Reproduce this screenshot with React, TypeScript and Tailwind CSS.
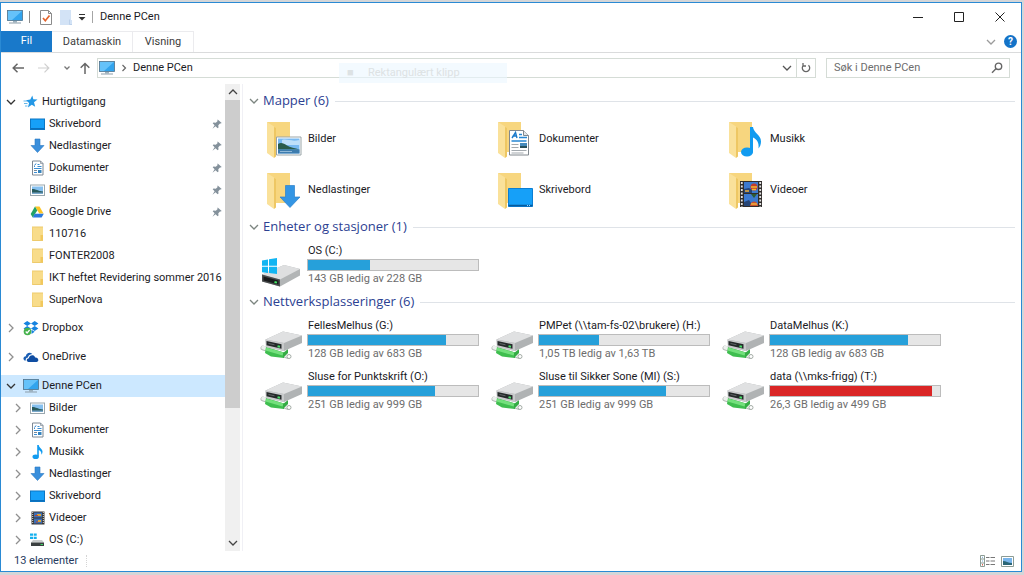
import React, { useState } from 'react';

type IconName =
  | 'desktop'
  | 'download'
  | 'document'
  | 'picture'
  | 'drive'
  | 'folder'
  | 'music'
  | 'video'
  | 'osdrive'
  | 'star'
  | 'dropbox'
  | 'onedrive'
  | 'pc';

interface TreeItem {
  label: string;
  icon: IconName;
  pinned?: boolean;
}

interface Drive {
  name: string;
  info: string;
  used: number;
  full?: boolean;
  system?: boolean;
}

const quickAccess: TreeItem[] = [
  { label: 'Skrivebord', icon: 'desktop', pinned: true },
  { label: 'Nedlastinger', icon: 'download', pinned: true },
  { label: 'Dokumenter', icon: 'document', pinned: true },
  { label: 'Bilder', icon: 'picture', pinned: true },
  { label: 'Google Drive', icon: 'drive', pinned: true },
  { label: '110716', icon: 'folder' },
  { label: 'FONTER2008', icon: 'folder' },
  { label: 'IKT heftet Revidering sommer 2016', icon: 'folder' },
  { label: 'SuperNova', icon: 'folder' },
];

const pcItems: TreeItem[] = [
  { label: 'Bilder', icon: 'picture' },
  { label: 'Dokumenter', icon: 'document' },
  { label: 'Musikk', icon: 'music' },
  { label: 'Nedlastinger', icon: 'download' },
  { label: 'Skrivebord', icon: 'desktop' },
  { label: 'Videoer', icon: 'video' },
  { label: 'OS (C:)', icon: 'osdrive' },
];

const folders: TreeItem[] = [
  { label: 'Bilder', icon: 'picture' },
  { label: 'Dokumenter', icon: 'document' },
  { label: 'Musikk', icon: 'music' },
  { label: 'Nedlastinger', icon: 'download' },
  { label: 'Skrivebord', icon: 'desktop' },
  { label: 'Videoer', icon: 'video' },
];

const localDrives: Drive[] = [
  { name: 'OS (C:)', info: '143 GB ledig av 228 GB', used: 36.5, system: true },
];

const networkDrives: Drive[] = [
  { name: 'FellesMelhus (G:)', info: '128 GB ledig av 683 GB', used: 81 },
  { name: 'PMPet (\\\\tam-fs-02\\brukere) (H:)', info: '1,05 TB ledig av 1,63 TB', used: 35.5 },
  { name: 'DataMelhus (K:)', info: '128 GB ledig av 683 GB', used: 81 },
  { name: 'Sluse for Punktskrift (O:)', info: '251 GB ledig av 999 GB', used: 74.5 },
  { name: 'Sluse til Sikker Sone (MI) (S:)', info: '251 GB ledig av 999 GB', used: 74.5 },
  { name: 'data (\\\\mks-frigg) (T:)', info: '26,3 GB ledig av 499 GB', used: 95, full: true },
];

const SmallIcon = ({ name }: { name: IconName }) => {
  return (
    <svg viewBox="0 0 16 16" className="h-4 w-4 shrink-0" aria-hidden="true">
      {name === 'desktop' && (
        <>
          <rect x="0.5" y="3" width="14" height="10.5" fill="#16a0f8" stroke="#0b76c4" />
          <path d="M1 12.5h13" stroke="#0b6fbb" />
        </>
      )}
      {name === 'download' && (
        <path d="M5 1h5v6.500h4L7.500 14.500 1 7.500h4z" fill="#3a8fdc" stroke="#2a78c2" strokeWidth=".6" />
      )}
      {name === 'document' && (
        <>
          <path d="M2.500 1h8l2.500 2.500V15H2.500z" fill="#fff" stroke="#7d8894" />
          <path d="M10.500 1v2.500H13" fill="none" stroke="#7d8894" strokeWidth=".7" />
          <path d="M7.500 4.500h2M4 6.500h1m2.500 0h4M4 8.500h7.500M4 12.500h3" stroke="#3b8fd4" />
          <path d="M4.500 5.500l1.500-2" stroke="#1f78c8" />
          <rect x="8" y="10" width="3.500" height="3" fill="#3583bd" />
          <path d="M4 10.500h3" stroke="#7d8894" />
        </>
      )}
      {name === 'picture' && (
        <>
          <rect x="0.500" y="3" width="14" height="10.500" fill="#fff" stroke="#9aa7ae" />
          <path d="M2 4.500h11V12H2z" fill="#86c0ef" />
          <path d="M2 7c4 0 6 2 11 2.500V12H2z" fill="#285b5d" />
          <path d="M2 10.500h11V12H2z" fill="#7aa9cc" />
        </>
      )}
      {name === 'drive' && (
        <>
          <path d="M5 2.500h4.500l4 7H9.300z" fill="#fdc526" />
          <path d="M5 2.500l2.300 4-4.600 7L.7 10z" fill="#23a265" />
          <path d="M4.700 9.700h9.100l-2.200 3.800H2.700z" fill="#2b79de" />
        </>
      )}
      {name === 'folder' && (
        <>
          <path d="M2 1h11v14H2z" fill="#f8dc8a" />
          <path d="M10.500 9H13v6h-2.500z" fill="#f2c85c" />
          <path d="M2 1h11M2 14.500h11" stroke="#edca6c" />
          <path d="M2.500 1v14" stroke="#f3d277" />
        </>
      )}
      {name === 'music' && (
        <>
          <path d="M7.200 1h1.600c0 3 3.700 3.500 3.700 6.500 0 1.500-.5 2.500-1.200 3.200C11.800 8 10.500 7 8.800 6v6.200H7.200z" fill="#119bf0" />
          <ellipse cx="5.700" cy="12.700" rx="3.200" ry="2.300" fill="#119bf0" />
        </>
      )}
      {name === 'video' && (
        <>
          <path d="M1.500 1.500h13v13h-13z" fill="#363636" />
          <path d="M2.700 2v12M13.300 2v12" stroke="#ddd" strokeDasharray="1 1" />
          <path d="M4 2.500h8v5H4zM4 8.500h8v5H4z" fill="#3d6fb5" />
          <path d="M7 4h4v2H7zM8 10h3v2H8z" fill="#dba536" />
          <path d="M5 5.500h3M6 12h2" stroke="#bd4630" />
        </>
      )}
      {name === 'osdrive' && (
        <>
          <path d="M0 1.500h3v2.300H0zM3.700 1.500h3v2.300h-3zM0 4.700h3V7H0zM3.700 4.700h3V7h-3z" fill="#14b0ee" />
          <path d="M3 8h9l2 2.500H1z" fill="#c9cccd" />
          <path d="M1 10.500h13V14H1z" fill="#3b4041" />
          <path d="M10.500 12.500H13" stroke="#3fd763" />
        </>
      )}
      {name === 'star' && (
        <>
          <path d="M9.300 1.500l1 3.700 4.200.3-3.500 2.700 1.200 4.600-3.400-2-3.900 2.700 1.200-4.500L3 6.300l4.300-.8z" fill="#2398e6" />
          <path d="M.5 7h3.500M1 9.500h3.500M2 12h2.500" stroke="#65b7eb" />
        </>
      )}
      {name === 'dropbox' && (
        <>
          <path
            d="M4.200 1L8 3.500 4.200 6 .5 3.500zM11.700 1l3.700 2.500L11.700 6 8 3.500zM4.200 6L8 8.500 4.200 11 .5 8.500zM11.700 6l3.700 2.500L11.700 11 8 8.500zM11.700 11.700L8.500 14V9.700l3.200 2z"
            fill="#1683e0"
          />
          <circle cx="4.500" cy="11.500" r="3.800" fill="#45b24c" />
          <path d="M2.700 11.500l1.400 1.500 2.500-3" fill="none" stroke="#fff" strokeWidth="1.200" />
        </>
      )}
      {name === 'onedrive' && (
        <>
          <path d="M1.500 11.500C-.5 10 .5 7.300 2.800 7.200 3.200 4 7 2.700 9.300 5c-3 .2-4 2-4.300 3.500-2 .3-2.700 2-2 3z" fill="#1b5fb4" />
          <path d="M5.500 13c-2.500-.5-2.200-3.500.4-3.700.2-3.300 5-4.300 6.300-.9 3.400-.3 4.300 4 1.300 4.600z" fill="#0f4da2" />
        </>
      )}
      {name === 'pc' && (
        <>
          <rect x=".5" y="1.500" width="15" height="10" fill="#32a4ee" stroke="#52738b" strokeWidth=".8" />
          <path d="M1 2h14L5 11H1z" fill="#65c2fa" />
          <path d="M6 12h4v1.500H6z" fill="#9db1bd" />
          <path d="M2 14h12" stroke="#8b9daa" />
        </>
      )}
    </svg>
  );
};

/* Open folder with the content symbol laid over its lower right corner */
const FolderIcon = ({ name }: { name: IconName }) => {
  return (
    <svg viewBox="0 0 40 40" className="h-10 w-10 shrink-0" aria-hidden="true">
      <path d="M5 2h23v30H12z" fill="#f7d67f" />
      <path d="M5 2l7 4.500V38L5 33z" fill="#fae19a" />
      <path d="M12 7v31l2-1.500V8z" fill="#eec763" />
      {name === 'picture' && (
        <>
          <path d="M14.500 17h24.500v18H14.500z" fill="#fff" stroke="#9aa5a8" />
          <path d="M16 18.500h21.500v15H16z" fill="#79baf2" />
          <path d="M20 20c5-1.500 9 2 17.500 0v5H20z" fill="#bfe0fa" />
          <path d="M16 24c3-2 6-.5 9 1.500s8 2.500 12.500 4H16z" fill="#2a5c4b" />
          <path d="M16 29.500h21.500v4H16z" fill="#3d7cae" />
          <path d="M18 31.500h12" stroke="#91b9d7" />
        </>
      )}
      {name === 'document' && (
        <>
          <path d="M16.500 10.500h14l5 5v19.500h-19z" fill="#fff" stroke="#81888e" />
          <path d="M30.500 10.500v5h5" fill="#e3e6e8" stroke="#81888e" />
          <path d="M19 18l3.500-5.500L24 18m-4.500-2h4" fill="none" stroke="#1c7bcb" strokeWidth="1.400" />
          <path d="M26 14.500h3M26 17.500h8M18.500 21h15" stroke="#2687d3" strokeWidth="1.300" />
          <path d="M18.500 24.500h7M18.500 27.500h7M18.500 30.500h15M18.500 33h12" stroke="#a3a9ae" />
          <path d="M27 23h7v5h-7z" fill="#458abc" />
          <path d="M27 26h7v2h-7z" fill="#274f5b" />
        </>
      )}
      {name === 'music' && (
        <>
          <path
            d="M26 7h3c.5 6 8 7.500 8 14.500 0 3-1 5-2.500 7 .7-6-1.500-9-5.500-11v15h-3z"
            fill="#119bf0"
          />
          <ellipse cx="23" cy="32" rx="6" ry="4.500" fill="#119bf0" />
        </>
      )}
      {name === 'download' && (
        <path d="M23.500 14.500h9V26H38L28 36.500 18 26h5.500z" fill="#3395e4" stroke="#2b80ca" strokeWidth=".7" />
      )}
      {name === 'desktop' && (
        <>
          <path d="M15.500 17.500h24v18h-24z" fill="#16a0f8" stroke="#0b7ed3" />
          <path d="M15.500 34.500h24" stroke="#075a9c" strokeWidth="1.500" />
          <path d="M34 34.500h4" stroke="#94d5ff" strokeDasharray="1 1" />
        </>
      )}
      {name === 'video' && (
        <>
          <path d="M16 10h22v26H16z" fill="#302d2b" />
          <path d="M17.800 11v25M36.200 11v25" stroke="#e3e3e3" strokeWidth="1.800" strokeDasharray="2 1.500" />
          <path d="M20 11h14v11H20zM20 23h14v12H20z" fill="#3c7ad0" />
          <path d="M20 18l5-1 3 2v3h-8zM20 31l5-2 4 6h-9z" fill="#264577" />
          <circle cx="30" cy="16" r="3.500" fill="#c43d2c" />
          <path d="M27 16h6M28 18.500h4" stroke="#f1b92f" strokeWidth="1.500" />
          <path d="M27 23h6l-3 4z" fill="#2d5c35" />
          <path d="M26 35c0-6 8-6 8 0z" fill="#cc512e" />
          <path d="M27 33h6M21 20h4" stroke="#efb13c" strokeWidth="1.300" />
        </>
      )}
    </svg>
  );
};

const DriveIcon = ({ system }: { system?: boolean }) => {
  return (
    <svg viewBox="0 0 44 40" className="-mx-0.5 h-10 w-11 shrink-0" aria-hidden="true">
      {system ? (
        <>
          <path d="M2 23.500L24 14l16 4v6.500L20 35.500 2 30.500z" fill="#b2b5b6" />
          <path d="M2 23.500L24 14l16 4-20 10.500z" fill="#dedfe0" />
          <path d="M2 23.500l18 5v7L2 30.500z" fill="#4b4e4f" />
          <path d="M3.500 25.500l15 4v4l-15-4z" fill="#191b1c" />
          <path d="M14.500 31l2.500.6" stroke="#45e866" strokeWidth="2" />
          <path d="M2 9.500l6-1v6.300H2zM9 8.300L17 7v7.800H9zM2 15.800h6V22l-6-.8zM9 15.800h8V23l-8-1z" fill="#12b5f2" />
        </>
      ) : (
        <>
          <path d="M3 22l25 8.500" stroke="#b3bab5" strokeWidth="5" strokeLinecap="round" />
          <path d="M3 21.500l25 8.500" stroke="#eef1ef" strokeWidth="3.500" strokeLinecap="round" />
          <path d="M6 21l18 5.500v5.500L11 30.500 5 27z" fill="#3fbe4f" />
          <path d="M6 23l17 5" stroke="#73e07c" strokeWidth="3" />
          <path d="M23 27l5-4v4l-5 5z" fill="#35ac45" />
          <circle cx="29" cy="30.500" r="2" fill="#fff" stroke="#a6aea8" />
          <path d="M5.500 13.500L23 5.500 42 9.500V17L24 25 6 21z" fill="#b0b3b4" />
          <path d="M5.500 13.500L23 5.500l19 4L24 17z" fill="#e0e1e2" />
          <path d="M5.500 13.500L24 17v8L6 21z" fill="#c8cacb" />
          <path d="M6.500 15l15 3.300v4.500l-15-3.500z" fill="#25292a" />
          <path d="M8.500 17.500l6 1.300" stroke="#5f6566" />
          <path d="M17.500 20.300l2.500.5" stroke="#48e069" strokeWidth="2" />
        </>
      )}
    </svg>
  );
};

const Chevron = ({ open, className }: { open?: boolean; className?: string }) => (
  <svg viewBox="0 0 10 10" className={`h-2.5 w-2.5 ${className || ''}`} fill="none" stroke="currentColor" aria-hidden="true">
    <path d={open ? 'M1 3l4 4 4-4' : 'M3 1l4 4-4 4'} strokeWidth="1.300" />
  </svg>
);

const Pin = () => (
  <svg viewBox="0 0 10 10" className="h-2.5 w-2.5 shrink-0" aria-hidden="true">
    <path d="M5.700.5l4 3.500-1 .5-.7-.1-1.700 1.900.2 2.200-.8.700L3.500 7.200.5 9.800 2.600 6.300.7 4.300l.8-.7 2.300.1 1.900-1.600-.4-.9z" fill="#84919b" />
  </svg>
);

interface TreeRowProps extends TreeItem {
  child?: boolean;
  open?: boolean;
  expandable?: boolean;
  selected?: boolean;
}

const TreeRow: React.FC<TreeRowProps> = ({
  label,
  icon,
  pinned,
  child,
  open,
  expandable,
  selected,
}) => {
  return (
    <button
      className={`flex h-[22px] w-full items-center pr-[3px] text-left ${child ? 'pl-[7px]' : ''} ${
        selected ? 'bg-[#cce8ff]' : 'hover:bg-[#e5f3ff]'
      }`}
    >
      <span className="mr-0.5 flex w-5 shrink-0 justify-center">
        {expandable && <Chevron open={open} className={open ? 'text-[#333]' : 'text-[#8f8f8f]'} />}
      </span>
      <SmallIcon name={icon} />
      <span className="ml-[3px] flex-1 whitespace-nowrap">{label}</span>
      {pinned && <Pin />}
    </button>
  );
};

const Section = ({ title, children }: { title: string; children: React.ReactNode }) => {
  const [open, setOpen] = useState<boolean>(true);

  return (
    <section>
      <h2 className="flex h-6 items-center gap-1.5 pb-0.5 font-['Open_Sans',sans-serif] text-[13px] text-[#2c4192]">
        <button onClick={() => setOpen(!open)} className="flex items-center gap-1 whitespace-nowrap">
          <Chevron open={open} className="text-[#7c8580]" />
          {title}
        </button>
        <span className="h-px flex-1 bg-[#dfe3e8]" />
      </h2>
      {open && (
        <div className="grid auto-rows-[51px] grid-cols-[repeat(auto-fill,231px)] pl-[13px]">
          {children}
        </div>
      )}
    </section>
  );
};

const DriveTile = ({ drive }: { drive: Drive }) => {
  return (
    <button className="flex items-start gap-[5px] text-left">
      <span className="pt-[11px]">
        <DriveIcon system={drive.system} />
      </span>
      <span className="block w-[172px] pt-[3px] leading-4">
        <span className="block pl-px whitespace-nowrap">{drive.name}</span>
        <span className="block h-3 border border-[#bcbcbc] bg-[#e6e6e6]">
          <span
            className={`block h-full ${drive.full ? 'bg-[#da2626]' : 'bg-[#26a0da]'}`}
            style={{ width: `${drive.used}%` }}
          />
        </span>
        <span className="block pl-px whitespace-nowrap text-[#6d6d6d]">{drive.info}</span>
      </span>
    </button>
  );
};

const App: React.FC = () => {
  const [search, setSearch] = useState<string>('');

  return (
    <div className="flex h-screen flex-col bg-[#d4d6d8] pt-0.5 pr-0.5 pb-[3px] font-[Roboto,sans-serif] text-[11px] text-[#1b1b1f]">
      <div className="flex min-h-0 flex-1 flex-col border border-[#2a8ad4] bg-white">
        {/* Title bar */}
        <header className="flex h-7 shrink-0 items-center">
          <div className="flex flex-1 items-center pl-1.5">
            <SmallIcon name="pc" />
            <span className="ml-1.5 h-3 w-px bg-[#8c8c8c]" />
            <button aria-label="Egenskaper" className="ml-2.5">
              <svg viewBox="0 0 12 15" className="h-[15px] w-3">
                <path d="M.5.5h8l3 3v11H.5z" fill="#fff" stroke="#8b8b8b" />
                <path d="M8.500.5v3h3" fill="none" stroke="#8b8b8b" />
                <path d="M3 8l2.300 2.700L9.500 5.500" fill="none" stroke="#e3632c" strokeWidth="1.700" />
              </svg>
            </button>
            <button aria-label="Ny mappe" className="ml-2">
              <svg viewBox="0 0 12 15" className="h-[15px] w-3">
                <path d="M0 0h11v10h1v5H0z" fill="#d3e3f6" />
                <path d="M9.500 9.500v5H12" fill="none" stroke="#bcd1eb" />
              </svg>
            </button>
            <button aria-label="Tilpass verktøylinjen" className="ml-1.5">
              <svg viewBox="0 0 8 8" className="h-2 w-2">
                <path d="M1 1.500h6" stroke="#333" />
                <path d="M.5 4h7L4 7.500z" fill="#333" />
              </svg>
            </button>
            <span className="ml-1.5 h-3 w-px bg-[#a5a5a5]" />
            <h1 className="ml-[7px]">Denne PCen</h1>
          </div>
          <button aria-label="Minimer" className="flex h-7 w-[41px] items-center justify-center">
            <svg viewBox="0 0 10 10" className="h-2.5 w-2.5" fill="none" stroke="#222">
              <path d="M0 5.500h10" />
            </svg>
          </button>
          <button aria-label="Maksimer" className="flex h-7 w-[41px] items-center justify-center">
            <svg viewBox="0 0 10 10" className="h-2.5 w-2.5" fill="none" stroke="#222">
              <path d="M.5.5h9v9h-9z" />
            </svg>
          </button>
          <button aria-label="Lukk" className="flex h-7 w-[42px] items-center justify-center">
            <svg viewBox="0 0 10 10" className="h-2.5 w-2.5" fill="none" stroke="#222">
              <path d="M.5.5l9 9M9.500.5l-9 9" />
            </svg>
          </button>
        </header>

        {/* Ribbon tabs */}
        <nav className="flex h-[22px] shrink-0 items-stretch border-b border-[#dadbdc] text-[#3c3c3c]">
          <button className="w-[51px] bg-[#1979ca] text-white">Fil</button>
          <button className="w-[81px] border-t border-r border-[#ebebee]">Datamaskin</button>
          <button className="w-[61px] border-t border-r border-[#ebebee]">Visning</button>
          <span className="flex-1" />
          <button aria-label="Utvid båndet" className="mr-2">
            <Chevron open className="text-[#9b9b9b]" />
          </button>
          <button aria-label="Hjelp" className="mr-1 flex items-center">
            <span className="flex h-[13px] w-[13px] items-center justify-center rounded-full bg-[#1473c8] text-[10px] font-bold text-white">
              ?
            </span>
          </button>
        </nav>

        {/* Address bar */}
        <div className="relative flex h-[31px] shrink-0 items-center pr-[11px] pb-px pl-[11px]">
          <button aria-label="Tilbake">
            <svg viewBox="0 0 12 10" className="h-2.5 w-3" fill="none" stroke="#666" strokeWidth="1.500">
              <path d="M12 5H1.500M5.500.7L1.200 5l4.300 4.300" />
            </svg>
          </button>
          <button aria-label="Frem" className="ml-3.5">
            <svg viewBox="0 0 12 10" className="h-2.5 w-3" fill="none" stroke="#cfcfcf" strokeWidth="1.200">
              <path d="M0 5h10.500M6.500.7L10.800 5 6.500 9.300" />
            </svg>
          </button>
          <button aria-label="Nylige plasseringer" className="ml-3.5">
            <svg viewBox="0 0 6 6" className="h-1.5 w-1.5" fill="none" stroke="#777" strokeWidth="1.300">
              <path d="M.5 1.500L3 4l2.500-2.500" />
            </svg>
          </button>
          <button aria-label="Opp" className="ml-2.5">
            <svg viewBox="0 0 10 12" className="h-3 w-2.5" fill="none" stroke="#666" strokeWidth="1.500">
              <path d="M5 12V1.500M.7 5.800L5 1.500l4.300 4.300" />
            </svg>
          </button>
          <div className="ml-[7px] flex h-5 flex-1 items-center border border-[#d5dcd6]">
            <button className="flex items-center pl-px">
              <SmallIcon name="pc" />
              <svg viewBox="0 0 6 8" className="ml-1.5 h-2 w-1.5" fill="none" stroke="#666" strokeWidth="1.200">
                <path d="M1.500 1l3 3-3 3" />
              </svg>
              <span className="ml-1.5">Denne PCen</span>
            </button>
            <span className="flex-1" />
            <button aria-label="Tidligere plasseringer" className="px-1">
              <Chevron open className="text-[#555]" />
            </button>
            <button
              aria-label="Oppdater"
              className="flex h-full w-[19px] items-center justify-center border-l border-[#d5dcd6]"
            >
              <svg viewBox="0 0 10 10" className="h-2.5 w-2.5" fill="none" stroke="#666" strokeWidth="1.300">
                <path d="M2.500 2.200a3.700 3.700 0 1 0 5 0M2 0v3h3" />
              </svg>
            </button>
          </div>
          <div className="ml-2.5 flex h-5 w-[184px] items-center border border-[#d5dcd6] pr-1.5 pl-[7px]">
            <input
              aria-label="Søk i Denne PCen"
              placeholder="Søk i Denne PCen"
              value={search}
              onChange={(e) => setSearch(e.target.value)}
              className="min-w-0 flex-1 outline-none placeholder:text-[#6d6d6d]"
            />
            <svg viewBox="0 0 12 12" className="h-3 w-3" fill="none" stroke="#666" strokeWidth="1.400" aria-hidden="true">
              <circle cx="7.500" cy="4.300" r="3.200" />
              <path d="M5.200 6.600L1 10.800" />
            </svg>
          </div>

          {/* Fading menu highlight */}
          <div className="pointer-events-none absolute top-2.5 left-[338px] flex h-5 w-[168px] items-center bg-[#ebf6ff]/60 pl-2 text-[#dde2e4]">
            <span className="w-[21px]">■</span>
            Rektangulært klipp
          </div>
        </div>

        <div className="flex min-h-0 flex-1">
          {/* Navigation pane */}
          <aside className="flex w-[239px] shrink-0">
            <div className="min-w-0 flex-1 overflow-hidden pt-[7px]">
              <TreeRow label="Hurtigtilgang" icon="star" open expandable />
              {quickAccess.map((item) => (
                <TreeRow key={item.label} {...item} child />
              ))}
              <div className="mt-1.5 flex flex-col gap-[7px]">
                <TreeRow label="Dropbox" icon="dropbox" expandable />
                <TreeRow label="OneDrive" icon="onedrive" expandable />
                <TreeRow label="Denne PCen" icon="pc" open expandable selected />
              </div>
              {pcItems.map((item) => (
                <TreeRow key={item.label} {...item} child expandable />
              ))}
            </div>
            <div className="flex w-[15px] flex-col bg-[#f0f0f0] text-[#444]">
              <button aria-label="Rull opp" className="flex h-4 items-center justify-center">
                <Chevron open className="rotate-180" />
              </button>
              <div className="flex-[308] bg-[#cdcdcd]" />
              <div className="flex-[127]" />
              <button aria-label="Rull ned" className="flex h-4 items-center justify-center">
                <Chevron open />
              </button>
            </div>
          </aside>

          {/* Folder contents */}
          <main className="ml-0.5 min-w-0 flex-1 overflow-hidden border-l border-[#f0f0f5] pt-[6px] pr-1.5 pl-1.5">
            <Section title="Mapper (6)">
              {folders.map((folder) => (
                <button key={folder.label} className="flex items-center gap-1.5 text-left">
                  <FolderIcon name={folder.icon} />
                  <span>{folder.label}</span>
                </button>
              ))}
            </Section>
            <Section title="Enheter og stasjoner (1)">
              {localDrives.map((drive) => (
                <DriveTile key={drive.name} drive={drive} />
              ))}
            </Section>
            <Section title="Nettverksplasseringer (6)">
              {networkDrives.map((drive) => (
                <DriveTile key={drive.name} drive={drive} />
              ))}
            </Section>
          </main>
        </div>

        {/* Status bar */}
        <footer className="flex h-5 shrink-0 items-center pr-[7px] pl-[13px] text-[#263a5e]">
          <span>13 elementer</span>
          <span className="ml-2 h-3 border-l border-dotted border-[#d5d5d5]" />
          <span className="flex-1" />
          <button aria-label="Detaljer" className="mr-1.5">
            <svg viewBox="0 0 15 12" className="h-3 w-[15px]" fill="none">
              <path d="M.5.5h4v11h-4zM.5 4h4M.5 8h4" stroke="#8b9b94" />
              <path d="M2 2.300h1M2 6h1" stroke="#69a5d6" />
              <path d="M2 9.800h1" stroke="#dd6755" strokeWidth="1.500" />
              <path d="M6 2.500h3.500m1 0H15M6 6h3.500m1 0H15M6 9.500h3.500m1 0H15" stroke="#777" />
            </svg>
          </button>
          <button aria-label="Store ikoner">
            <svg viewBox="0 0 13 11" className="h-[11px] w-[13px]">
              <path d="M.5.5h12v10H.5z" fill="#fff" stroke="#8b9b94" />
              <path d="M2 2h9v7H2z" fill="#79b5eb" />
              <path d="M2 5c3 0 5 2 9 2v2H2z" fill="#2b6676" />
            </svg>
          </button>
        </footer>
      </div>
    </div>
  );
};

export default App;
